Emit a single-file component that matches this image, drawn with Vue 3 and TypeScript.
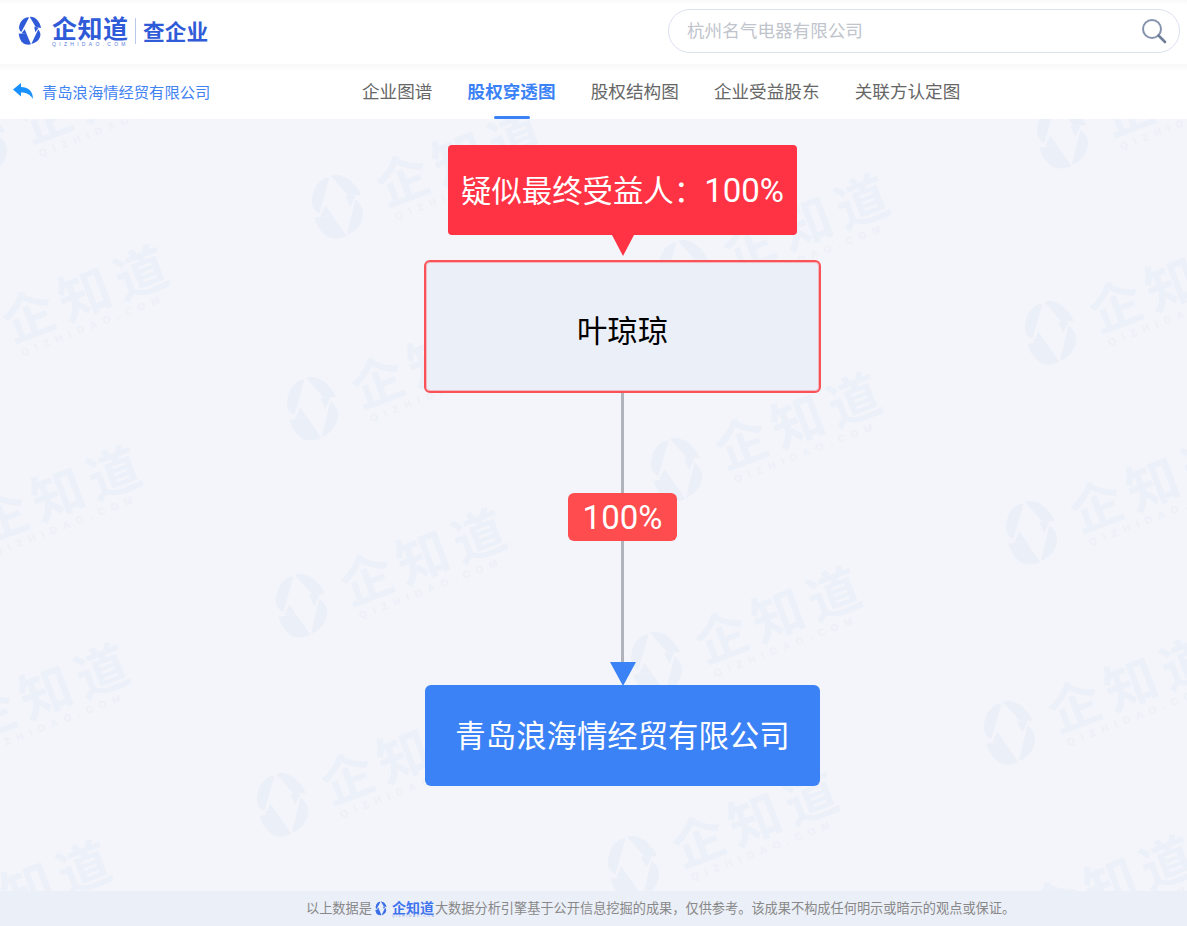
<script setup lang="ts">
const tabs = ["企业图谱", "股权穿透图", "股权结构图", "企业受益股东", "关联方认定图"];
const activeTab = "股权穿透图";

// 水印中心点（页面坐标）
const marks = [
  [-18, 144], [-36, 343], [-63, 543], [-75, 741], [-93, 938],
  [338, 207], [313, 409], [302, 606], [283, 805],
  [685, 272], [677, 470], [657, 664], [634, 868],
  [1063, 137], [1051, 333], [1032, 533], [1010, 733], [990, 933],
];

function markStyle(m: number[]) {
  return { left: m[0] + "px", top: m[1] - 119 + "px" };
}
</script>

<template>
  <div class="page">
    <svg class="defs" width="0" height="0" aria-hidden="true">
      <symbol id="qzd-logo" viewBox="-27 -33 54 66">
        <path d="M-8.5-29.5C-18-29-26-19-26-5C-26 0-23 4-18.7 6Z" />
        <path d="M-7-31C3-35 16-27 23-12L10.7-11.3Z" />
        <path d="M7.3-11.3H17.3L12.3 0Z" />
        <path d="M17.3-7.4C22-4 25.5 1 25 7C24.5 17 17 25 9 28Z" />
        <path d="M-23.7 10.8L-6 8.3L8.3 29C2 32-5 32-10 30C-16 27-21 19-23.7 10.8Z" />
        <path d="M-12.7-1.5L-5.7 8.3L-17.7 9.3Z" />
      </symbol>
    </svg>

    <header class="topbar">
      <div class="brand">
        <svg class="brand-logo"><use href="#qzd-logo" /></svg>
        <div class="brand-name">
          <span class="brand-cn">企知道</span>
          <span class="brand-en">QIZHIDAO.COM</span>
        </div>
        <span class="brand-line"></span>
        <span class="brand-sub">查企业</span>
      </div>
      <div class="search">
        <input class="search-input" type="text" placeholder="杭州名气电器有限公司" />
        <svg class="search-icon" width="26" height="26" viewBox="0 0 26 26" fill="none">
          <circle cx="11" cy="11" r="9" stroke="#8592ad" stroke-width="2" />
          <path d="M17.5 17.5L24 24" stroke="#6f7d99" stroke-width="2.6" stroke-linecap="round" />
        </svg>
      </div>
    </header>

    <nav class="nav">
      <a class="back">
        <svg width="20" height="16" viewBox="0 0 20 16" fill="#1890ff">
          <path d="M0 6.5L8 0V4C15 4 20 8 20 16C17 11 13 9.5 8 9.5V13.5Z" />
        </svg>
        <span>青岛浪海情经贸有限公司</span>
      </a>
      <ul class="tabs">
        <li v-for="t in tabs" :key="t" class="tab" :class="{ active: t === activeTab }">{{ t }}</li>
      </ul>
    </nav>

    <main class="canvas">
      <div class="watermark">
        <div v-for="(m, i) in marks" :key="i" class="mark" :style="markStyle(m)">
          <svg class="mark-logo"><use href="#qzd-logo" /></svg>
          <div class="mark-text">
            <span class="mark-cn">企知道</span>
            <span class="mark-en">QIZHIDAO.COM</span>
          </div>
        </div>
      </div>

      <div class="chart">
        <div class="tag"><span>疑似最终受益人：<span class="tag-num">100%</span></span></div>
        <div class="node person">叶琼琼</div>
        <div class="edge">
          <span class="line line-a"></span>
          <span class="percent">100%</span>
          <span class="line line-b"></span>
          <span class="arrow"></span>
        </div>
        <div class="node company">青岛浪海情经贸有限公司</div>
      </div>
    </main>

    <footer class="foot">
      <span>以上数据是</span>
      <svg class="foot-logo"><use href="#qzd-logo" /></svg>
      <span class="foot-brand">
        <b>企知道</b>
        <i>QIZHIDAO.COM</i>
      </span>
      <span>大数据分析引擎基于公开信息挖掘的成果，仅供参考。该成果不构成任何明示或暗示的观点或保证。</span>
    </footer>
  </div>
</template>

<style>
html,
body {
  margin: 0;
  background: #fff;
}
</style>

<style scoped>
.page {
  height: 926px;
  display: flex;
  flex-direction: column;
  overflow: hidden;
  font-family: "Noto Sans CJK SC", "Noto Sans", sans-serif;
}

.defs {
  position: absolute;
}

.topbar {
  height: 64px;
  flex: none;
  box-sizing: border-box;
  padding: 9px 7px 11px 18px;
  display: flex;
  align-items: center;
  justify-content: space-between;
  background: linear-gradient(#f9f9f9, #fff 4px);
}

.brand {
  display: flex;
  align-items: center;
}

.brand-logo {
  width: 24px;
  height: 30px;
  fill: #2f5bd8;
  transform: rotate(12deg);
}

.brand-name {
  margin-left: 10px;
  width: 76px;
  display: flex;
  flex-direction: column;
}

.brand-cn {
  font-size: 25px;
  line-height: 25px;
  font-weight: 700;
  letter-spacing: 0.5px;
  color: #2f5bd8;
  white-space: nowrap;
}

.brand-en {
  margin-top: 2px;
  font-size: 5px;
  line-height: 5px;
  letter-spacing: 3.3px;
  color: #5a7ce0;
  white-space: nowrap;
  font-family: "Liberation Sans", sans-serif;
}

.brand-line {
  width: 1px;
  height: 26px;
  margin: 0 7px;
  background: #bcc9ee;
}

.brand-sub {
  font-size: 21.7px;
  font-weight: 700;
  color: #2f5bd8;
  margin-top: -2px;
}

.search {
  width: 512px;
  height: 44px;
  box-sizing: border-box;
  border: 1px solid #dde2f1;
  border-radius: 22px;
  padding: 0 12px 0 18px;
  display: flex;
  align-items: center;
  background: #fff;
}

.search-input {
  flex: 1;
  border: 0;
  outline: 0;
  padding: 0 0 4px;
  font: 400 17.6px "Noto Sans CJK SC", sans-serif;
  color: #606266;
}

.search-input::placeholder {
  color: #c0c4cc;
  opacity: 1;
}

.nav {
  height: 55px;
  flex: none;
  box-sizing: border-box;
  padding: 8px 0 0 13px;
  display: flex;
  background: linear-gradient(#f8f8f9, #fff 8px);
}

.back {
  display: flex;
  align-items: center;
  gap: 9px;
  width: 349px;
  height: 38px;
  font-size: 15.3px;
  color: #3f83f3;
  white-space: nowrap;
}

.tabs {
  list-style: none;
  margin: 0;
  padding: 0;
  display: flex;
  gap: 35.2px;
}

.tab {
  position: relative;
  height: 47px;
  box-sizing: border-box;
  padding-top: 1px;
  font-size: 17.6px;
  line-height: 36px;
  color: #666;
  white-space: nowrap;
}

.tab.active {
  color: #3b82f6;
  font-weight: 700;
}

.tab.active::after {
  content: "";
  position: absolute;
  left: 50%;
  bottom: 0;
  width: 36px;
  height: 3px;
  margin-left: -18px;
  border-radius: 2px;
  background: #3b82f6;
}

.canvas {
  position: relative;
  flex: 1;
  overflow: hidden;
  background: #f3f5fa;
}

.watermark {
  position: absolute;
  inset: 0;
}

.mark {
  position: absolute;
  width: 0;
  height: 0;
}

.mark-logo {
  position: absolute;
  left: -27px;
  top: -33px;
  width: 54px;
  height: 66px;
  fill: #ebeff8;
}

.mark-text {
  position: absolute;
  left: 0;
  top: 0;
  width: 0;
  height: 0;
  transform: rotate(-21deg);
  transform-origin: 0 0;
}

.mark-cn {
  position: absolute;
  left: 44px;
  top: -35px;
  font-size: 52px;
  line-height: 60px;
  font-weight: 700;
  letter-spacing: 8px;
  color: #ecf0f8;
  white-space: nowrap;
}

.mark-en {
  position: absolute;
  left: 50px;
  top: 24px;
  font: 700 10px/12px "Liberation Sans", sans-serif;
  letter-spacing: 6.6px;
  color: #edf0f8;
  white-space: nowrap;
}

.chart {
  position: relative;
  width: 397px;
  margin-left: 424px;
  padding-top: 26px;
  display: flex;
  flex-direction: column;
  align-items: center;
}

.tag {
  position: relative;
  width: 349px;
  height: 90px;
  box-sizing: border-box;
  padding-bottom: 2px;
  display: flex;
  align-items: center;
  justify-content: center;
  border-radius: 4px;
  background: #ff3344;
  color: #fff;
  font-size: 30.4px;
  white-space: nowrap;
}

.tag-num {
  font-family: Roboto, sans-serif;
  font-size: 33px;
}

.tag::after {
  content: "";
  position: absolute;
  left: 50%;
  top: 100%;
  margin-left: -11px;
  border-style: solid;
  border-width: 21px 11px 0;
  border-color: #ff3344 transparent transparent;
}

.node {
  box-sizing: border-box;
  width: 100%;
  display: flex;
  align-items: center;
  justify-content: center;
  font-size: 30.4px;
  white-space: nowrap;
}

.person {
  margin-top: 25px;
  height: 133px;
  padding-top: 4px;
  border: 2px solid #fb5257;
  border-radius: 6px;
  background: #ebeff8;
  box-shadow: inset 0 0 0 1px rgba(251, 82, 87, 0.35);
  color: #000;
}

.company {
  width: 395px;
  height: 101px;
  margin-top: -1px;
  padding-bottom: 4px;
  border-radius: 6px;
  background: #3b82f6;
  color: #fff;
}

.edge {
  display: flex;
  flex-direction: column;
  align-items: center;
}

.line {
  display: block;
  width: 2.5px;
  background: #b0b3b9;
}

.line-a {
  height: 100px;
}

.line-b {
  height: 121px;
}

.percent {
  width: 109px;
  height: 48px;
  border-radius: 6px;
  background: #ff4d4f;
  color: #fff;
  font-family: Roboto, sans-serif;
  font-size: 33px;
  line-height: 49px;
  text-align: center;
}

.arrow {
  position: relative;
  border-style: solid;
  border-width: 24px 13px 0;
  border-color: #3b82f6 transparent transparent;
}

.foot {
  position: relative;
  height: 35px;
  flex: none;
  box-sizing: border-box;
  padding: 0 0 2px 306px;
  display: flex;
  align-items: center;
  background: #ebeff8;
  color: #888;
  font-size: 13.2px;
  white-space: nowrap;
}

.foot-logo {
  width: 12px;
  height: 15px;
  margin: 2px 5px 0 3px;
  fill: #3b6fe8;
  transform: rotate(12deg);
}

.foot-brand {
  width: 43px;
  display: flex;
  flex-direction: column;
  margin: 3px 0 0;
}

.foot-brand b {
  font-size: 14px;
  line-height: 13px;
  color: #3f74ee;
}

.foot-brand i {
  margin-top: 1px;
  font: normal 3px/3px "Liberation Sans", sans-serif;
  letter-spacing: 1.8px;
  color: #6f93ee;
}
</style>
